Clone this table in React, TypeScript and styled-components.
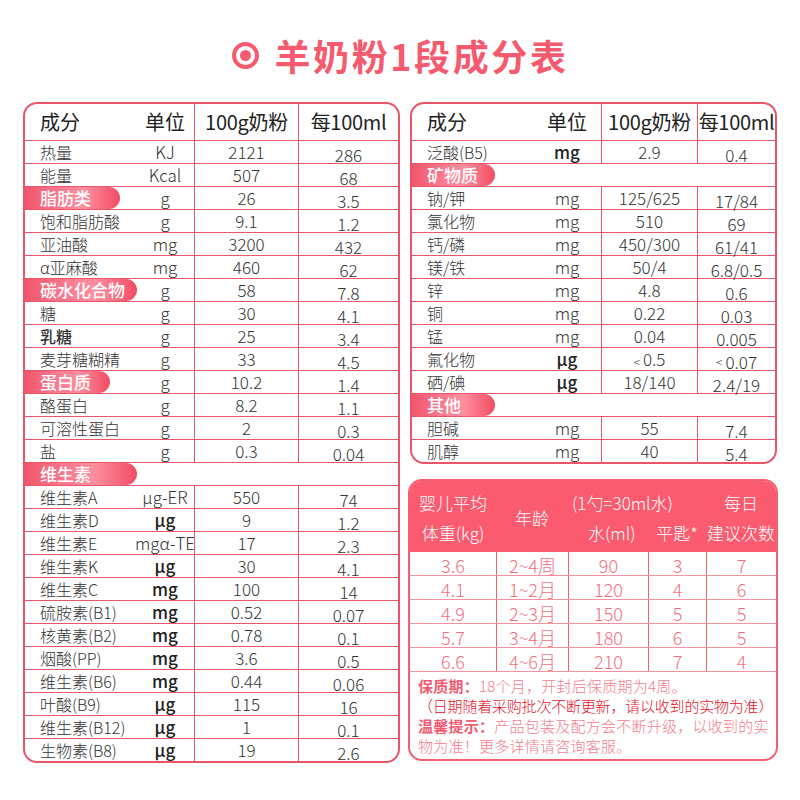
import React from 'react';
import styled, { createGlobalStyle } from 'styled-components';

const PINK = '#f65a6e';
const LINE = '#e9566a';
const FEED_TEXT = '#f3707e';

const Global = createGlobalStyle`
  html, body { margin: 0; padding: 0; background: #fff; }
  body {
    font-family: "Noto Sans CJK SC", "Noto Sans", sans-serif;
    color: #333;
  }
  * { box-sizing: border-box; }
`;

const Page = styled.div`
  width: 800px;
  height: 800px;
  padding: 0 22px 0 23px;
`;

const TitleBar = styled.header`
  height: 102px;
  padding-top: 8px;
  display: flex;
  align-items: center;
  justify-content: center;
  gap: 15px;
`;

const Target = styled.span`
  width: 27px;
  height: 27px;
  border-radius: 50%;
  border: 4px solid ${PINK};
  display: flex;
  align-items: center;
  justify-content: center;
  &::after {
    content: '';
    width: 11px;
    height: 11px;
    border-radius: 50%;
    background: ${PINK};
  }
`;

const TitleText = styled.h1`
  margin: 0;
  font-size: 36px;
  font-weight: 700;
  letter-spacing: 2.6px;
  line-height: 1;
  color: ${PINK};
`;

const Columns = styled.div`
  display: grid;
  grid-template-columns: 377px 370px;
  column-gap: 8px;
  align-items: start;
`;

const RightColumn = styled.div`
  display: flex;
  flex-direction: column;
  gap: 15px;
`;

const TableBox = styled.div<{ $inset?: boolean }>`
  border: 2px solid ${LINE};
  border-radius: 14px;
  overflow: hidden;
  margin: ${(p) => (p.$inset ? '0 1px 0 2px' : '0')};
`;

const Row = styled.div<{ $cols: string; $h: number }>`
  display: grid;
  grid-template-columns: ${(p) => p.$cols};
  grid-template-rows: ${(p) => p.$h}px;
  height: ${(p) => p.$h + 1}px;
  border-bottom: 1px solid ${LINE};
  line-height: 16px;
  &:last-child {
    border-bottom: none;
    height: ${(p) => p.$h}px;
  }
`;

const SectionRow = styled.div`
  height: 23px;
  border-bottom: 1px solid ${LINE};
  display: flex;
  line-height: 16px;
`;

const HeadName = styled.div`
  padding-left: 15px;
  display: flex;
  align-items: center;
  font-size: 20px;
  color: #222;
  white-space: nowrap;
`;

const HeadUnit = styled.div`
  display: flex;
  align-items: center;
  justify-content: center;
  font-size: 20px;
  color: #222;
  white-space: nowrap;
`;

const HeadValue = styled.div`
  border-left: 1px solid ${LINE};
  display: flex;
  align-items: center;
  justify-content: center;
  font-size: 20px;
  color: #222;
  white-space: nowrap;
  letter-spacing: -0.3px;
`;

const NameCell = styled.div<{ $flush?: boolean; $strong?: boolean }>`
  padding-left: ${(p) => (p.$flush ? 0 : 15)}px;
  display: flex;
  align-items: center;
  font-size: 16px;
  font-weight: ${(p) => (p.$strong ? 500 : 300)};
  color: #333;
  white-space: nowrap;
  position: relative;
  z-index: 1;
`;

const UnitCell = styled.div<{ $strong?: boolean }>`
  display: flex;
  align-items: center;
  justify-content: center;
  font-size: 17px;
  font-weight: ${(p) => (p.$strong ? 500 : 300)};
  color: ${(p) => (p.$strong ? '#222' : '#333')};
  white-space: nowrap;
`;

const ValueCell = styled.div<{ $low?: boolean }>`
  border-left: 1px solid ${LINE};
  display: flex;
  align-items: center;
  justify-content: center;
  padding-top: ${(p) => (p.$low ? 6 : 0)}px;
  font-size: 17px;
  font-weight: 300;
  color: #333;
  white-space: nowrap;
`;

const Lt = styled.span`
  font-size: 12px;
  margin-right: 3px;
  align-self: flex-end;
  line-height: 16px;
`;

const Pill = styled.div<{ $w: number }>`
  width: ${(p) => p.$w}px;
  height: 100%;
  flex: none;
  padding-left: 15px;
  display: flex;
  align-items: center;
  border-radius: 0 12px 12px 0;
  background: linear-gradient(90deg, #f1566b 0%, #f9738a 30%, #ff8fa0 62%, #f24c63 100%);
  color: #fff;
  font-size: 17px;
  font-weight: 500;
  white-space: nowrap;
`;

/* feeding table */
const FEED_COLS = '86px 72px 80px 58px 70px';

const FeedBox = styled.div`
  border: 2px solid #f2606f;
  border-radius: 14px;
  overflow: hidden;
`;

const FeedHead = styled.div`
  display: grid;
  grid-template-columns: ${FEED_COLS};
  grid-template-rows: 30px 30px;
  padding: 7px 0 4px;
  background: #fa5b6f;
  color: #fff;
  font-size: 17px;
  font-weight: 300;
  line-height: 20px;
`;

const HeadItem = styled.div<{ $col: string; $row: string; $pad?: number }>`
  grid-column: ${(p) => p.$col};
  grid-row: ${(p) => p.$row};
  display: flex;
  align-items: center;
  justify-content: ${(p) => (p.$pad !== undefined ? 'flex-start' : 'center')};
  padding-left: ${(p) => p.$pad ?? 0}px;
  white-space: nowrap;
`;

const FeedRow = styled.div`
  display: grid;
  grid-template-columns: ${FEED_COLS};
  grid-template-rows: 23px;
  height: 24px;
  border-bottom: 1px solid #f3939f;
  line-height: 18px;
  &:last-child {
    border-bottom-color: #ef6677;
  }
`;

const FeedCell = styled.div<{ $first?: boolean }>`
  border-left: ${(p) => (p.$first ? 'none' : '1px solid #e9606f')};
  display: flex;
  align-items: center;
  justify-content: center;
  padding-top: 2px;
  font-size: 18px;
  font-weight: 300;
  color: ${FEED_TEXT};
  white-space: nowrap;
`;

const Notes = styled.div`
  padding: 4px 6px 3px 8px;
  font-size: 15px;
  line-height: 20px;
  font-weight: 300;
  color: #f47d8c;
`;

const NoteLine = styled.p<{ $tone?: 'red' | 'pink' }>`
  margin: 0;
  color: ${(p) => (p.$tone === 'red' ? '#e6101f' : '#f47d8c')};
  letter-spacing: ${(p) => (p.$tone === 'red' ? '-0.2px' : '0.25px')};
  white-space: ${(p) => (p.$tone === 'red' ? 'nowrap' : 'normal')};
`;

const NoteLabel = styled.b`
  font-weight: 700;
  color: #f25c72;
`;

type Item = {
  name: string;
  unit?: string;
  g?: React.ReactNode;
  ml?: React.ReactNode;
  pill?: number;
  full?: boolean;
  strong?: boolean;
  nameStrong?: boolean;
};

const leftRows: Item[] = [
  { name: '热量', unit: 'KJ', g: '2121', ml: '286' },
  { name: '能量', unit: 'Kcal', g: '507', ml: '68' },
  { name: '脂肪类', unit: 'g', g: '26', ml: '3.5', pill: 95 },
  { name: '饱和脂肪酸', unit: 'g', g: '9.1', ml: '1.2' },
  { name: '亚油酸', unit: 'mg', g: '3200', ml: '432' },
  { name: ' α亚麻酸', unit: 'mg', g: '460', ml: '62' },
  { name: '碳水化合物', unit: 'g', g: '58', ml: '7.8', pill: 112 },
  { name: '糖', unit: 'g', g: '30', ml: '4.1' },
  { name: '乳糖', unit: 'g', g: '25', ml: '3.4', nameStrong: true },
  { name: '麦芽糖糊精', unit: 'g', g: '33', ml: '4.5' },
  { name: '蛋白质', unit: 'g', g: '10.2', ml: '1.4', pill: 85 },
  { name: '酪蛋白', unit: 'g', g: '8.2', ml: '1.1' },
  { name: '可溶性蛋白', unit: 'g', g: '2', ml: '0.3' },
  { name: '盐', unit: 'g', g: '0.3', ml: '0.04' },
  { name: '维生素', pill: 112, full: true },
  { name: '维生素A', unit: 'μg-ER', g: '550', ml: '74' },
  { name: '维生素D', unit: 'μg', g: '9', ml: '1.2', strong: true },
  { name: '维生素E', unit: 'mgα-TE', g: '17', ml: '2.3' },
  { name: '维生素K', unit: 'μg', g: '30', ml: '4.1', strong: true },
  { name: '维生素C', unit: 'mg', g: '100', ml: '14', strong: true },
  { name: '硫胺素(B1)', unit: 'mg', g: '0.52', ml: '0.07', strong: true },
  { name: '核黄素(B2)', unit: 'mg', g: '0.78', ml: '0.1', strong: true },
  { name: '烟酸(PP)', unit: 'mg', g: '3.6', ml: '0.5', strong: true },
  { name: '维生素(B6)', unit: 'mg', g: '0.44', ml: '0.06', strong: true },
  { name: '叶酸(B9)', unit: 'μg', g: '115', ml: '16', strong: true },
  { name: '维生素(B12)', unit: 'μg', g: '1', ml: '0.1', strong: true },
  { name: '生物素(B8)', unit: 'μg', g: '19', ml: '2.6', strong: true },
];

const rightRows: Item[] = [
  { name: '泛酸(B5)', unit: 'mg', g: '2.9', ml: '0.4', strong: true },
  { name: '矿物质', pill: 83, full: true },
  { name: '钠/钾', unit: 'mg', g: '125/625', ml: '17/84' },
  { name: '氯化物', unit: 'mg', g: '510', ml: '69' },
  { name: '钙/磷', unit: 'mg', g: '450/300', ml: '61/41' },
  { name: '镁/铁', unit: 'mg', g: '50/4', ml: '6.8/0.5' },
  { name: '锌', unit: 'mg', g: '4.8', ml: '0.6' },
  { name: '铜', unit: 'mg', g: '0.22', ml: '0.03' },
  { name: '锰', unit: 'mg', g: '0.04', ml: '0.005' },
  {
    name: '氟化物',
    unit: 'μg',
    g: (
      <>
        <Lt>&lt;</Lt>0.5
      </>
    ),
    ml: (
      <>
        <Lt>&lt;</Lt>0.07
      </>
    ),
    strong: true,
  },
  { name: '硒/碘', unit: 'μg', g: '18/140', ml: '2.4/19', strong: true },
  { name: '其他', pill: 83, full: true },
  { name: '胆碱', unit: 'mg', g: '55', ml: '7.4' },
  { name: '肌醇', unit: 'mg', g: '40', ml: '5.4' },
];

const feeding = [
  ['3.6', '2~4周', '90', '3', '7'],
  ['4.1', '1~2月', '120', '4', '6'],
  ['4.9', '2~3月', '150', '5', '5'],
  ['5.7', '3~4月', '180', '6', '5'],
  ['6.6', '4~6月', '210', '7', '4'],
];

function NutritionTable({ rows, cols, inset }: { rows: Item[]; cols: string; inset?: boolean }) {
  return (
    <TableBox $inset={inset}>
      <Row $cols={cols} $h={36}>
        <HeadName>成分</HeadName>
        <HeadUnit>单位</HeadUnit>
        <HeadValue>100g奶粉</HeadValue>
        <HeadValue>每100ml</HeadValue>
      </Row>
      {rows.map((r, i) =>
        r.full ? (
          <SectionRow key={i}>
            <Pill $w={r.pill ?? 90}>{r.name}</Pill>
          </SectionRow>
        ) : (
          <Row key={i} $cols={cols} $h={22}>
            {r.pill ? (
              <NameCell $flush>
                <Pill $w={r.pill}>{r.name}</Pill>
              </NameCell>
            ) : (
              <NameCell $strong={r.nameStrong}>{r.name}</NameCell>
            )}
            <UnitCell $strong={r.strong}>{r.unit}</UnitCell>
            <ValueCell>{r.g}</ValueCell>
            <ValueCell $low>{r.ml}</ValueCell>
          </Row>
        )
      )}
    </TableBox>
  );
}

function FeedingTable() {
  return (
    <FeedBox>
      <FeedHead>
        <HeadItem $col="1" $row="1">婴儿平均</HeadItem>
        <HeadItem $col="1" $row="2">体重(kg)</HeadItem>
        <HeadItem $col="2" $row="1 / 3">年龄</HeadItem>
        <HeadItem $col="3 / 5" $row="1" $pad={4}>(1勺=30ml水)</HeadItem>
        <HeadItem $col="3" $row="2" $pad={20}>水(ml)</HeadItem>
        <HeadItem $col="4" $row="2">平匙*</HeadItem>
        <HeadItem $col="5" $row="1">每日</HeadItem>
        <HeadItem $col="5" $row="2">建议次数</HeadItem>
      </FeedHead>
      {feeding.map((r, i) => (
        <FeedRow key={i}>
          {r.map((v, j) => (
            <FeedCell key={j} $first={j === 0}>
              {v}
            </FeedCell>
          ))}
        </FeedRow>
      ))}
      <Notes>
        <NoteLine>
          <NoteLabel>保质期：</NoteLabel>18个月，开封后保质期为4周。
        </NoteLine>
        <NoteLine $tone="red">（日期随着采购批次不断更新，请以收到的实物为准）</NoteLine>
        <NoteLine>
          <NoteLabel>温馨提示：</NoteLabel>产品包装及配方会不断升级，以收到的实物为准！更多详情请咨询客服。
        </NoteLine>
      </Notes>
    </FeedBox>
  );
}

export default function App() {
  return (
    <>
      <Global />
      <Page>
        <TitleBar>
          <Target />
          <TitleText>羊奶粉1段成分表</TitleText>
        </TitleBar>
        <Columns>
          <NutritionTable rows={leftRows} cols="111px 58px 104px 100px" />
          <RightColumn>
            <NutritionTable rows={rightRows} cols="121px 68px 96px 78px" inset />
            <FeedingTable />
          </RightColumn>
        </Columns>
      </Page>
    </>
  );
}
